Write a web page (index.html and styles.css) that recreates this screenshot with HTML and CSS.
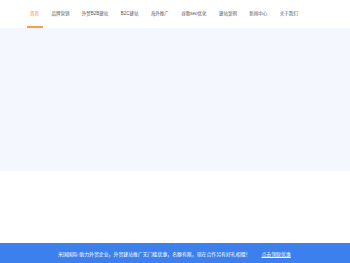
FILE: index.html
```html
<!DOCTYPE html>
<html lang="zh-CN">
<head>
    <meta charset="UTF-8">
    <meta name="viewport" content="width=device-width, initial-scale=1.0">
    <title>米国国际</title>
    <link rel="stylesheet" href="styles.css">
</head>
<body>
    <header class="topbar">
        <nav class="nav">
            <a class="nav-item active" href="#">首页</a>
            <a class="nav-item" href="#">品牌营销</a>
            <a class="nav-item" href="#">外贸<span class="latin">B2B</span>建站</a>
            <a class="nav-item" href="#"><span class="latin">B2C</span>建站</a>
            <a class="nav-item" href="#">海外推广</a>
            <a class="nav-item" href="#">谷歌<span class="latin">seo</span>优化</a>
            <a class="nav-item" href="#">建站案例</a>
            <a class="nav-item" href="#">新闻中心</a>
            <a class="nav-item" href="#">关于我们</a>
        </nav>
    </header>

    <section class="banner"></section>

    <div class="spacer"></div>

    <footer class="promo">
        <span class="promo-text">米国国际-助力外贸企业，外贸建站推广无门槛优惠，名额有限，现在合作另有好礼相赠！</span>
        <a class="promo-link" href="#">点击领取优惠</a>
    </footer>
</body>
</html>
```

FILE: styles.css
```css
body {
    margin: 0;
    padding: 0;
    background-color: #fff;
    font-family: "Noto Sans CJK SC", "Noto Sans", sans-serif;
    width: 350px;
    height: 263px;
    overflow: hidden;
    display: flex;
    flex-direction: column;
}

.topbar {
    height: 28px;
    background-color: #fff;
}

.nav {
    display: flex;
    height: 28px;
    padding-left: 26.5px;
}

.nav-item {
    display: block;
    height: 26px;
    line-height: 26px;
    padding: 0 3.5px;
    margin-right: 5.4px;
    font-size: 4.5px;
    color: #555;
    text-decoration: none;
    white-space: nowrap;
    border-bottom: 2px solid transparent;
}

.nav-item .latin {
    font-family: "Liberation Sans", sans-serif;
}

.nav-item.active {
    color: #f5862a;
    border-bottom-color: #fb9d47;
}

.banner {
    height: 143px;
    background-color: #f4f7fe;
}

.spacer {
    flex: 1;
}

.promo {
    height: 20px;
    background-color: #3b80ec;
    display: flex;
    align-items: center;
    padding-left: 58px;
    font-size: 4.9px;
    color: #fff;
}

.promo-text {
    white-space: nowrap;
}

.promo-link {
    margin-left: 11px;
    color: #fff;
    white-space: nowrap;
}
```
